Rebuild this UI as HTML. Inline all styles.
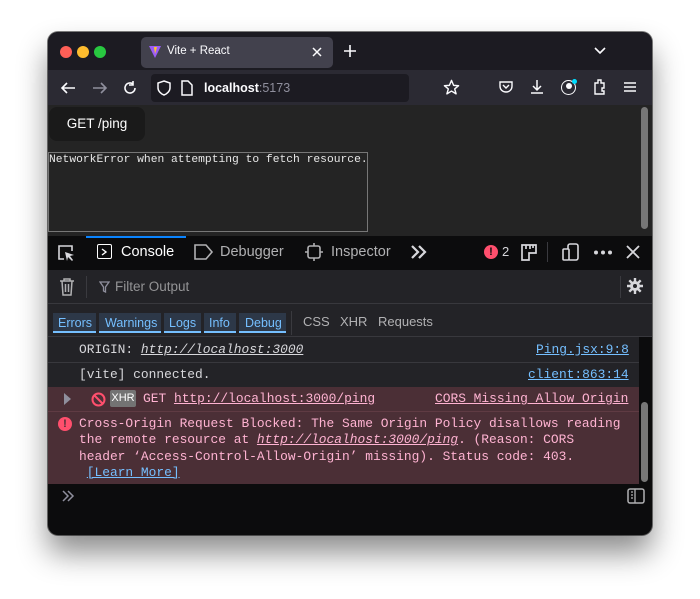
<!DOCTYPE html>
<html><head><meta charset="utf-8">
<style>
*{margin:0;padding:0;box-sizing:border-box}
body{width:700px;height:599px;background:#fff;position:relative;overflow:hidden;font-family:"Liberation Sans",sans-serif}
.a{position:absolute}
.win{left:48px;top:32px;width:604px;height:503px;border-radius:10px;overflow:hidden;background:#0c0c0d;box-shadow:0 18px 30px rgba(0,0,0,.45),0 0 0 1px rgba(0,0,0,.5)}
.mono{font-family:"Liberation Mono","DejaVu Sans Mono",monospace;font-size:12.9px;white-space:pre}
svg{position:absolute}
</style></head><body>
<div class="a win">
 <div class="a" style="left:0;top:0;width:604px;height:38px;background:#1c1b22"></div>
 <div class="a" style="left:12px;top:14px;width:12px;height:12px;border-radius:50%;background:#fe5f57"></div>
 <div class="a" style="left:29px;top:14px;width:12px;height:12px;border-radius:50%;background:#febc2e"></div>
 <div class="a" style="left:46px;top:14px;width:12px;height:12px;border-radius:50%;background:#28c840"></div>
 <div class="a" style="left:93px;top:5px;width:192px;height:31px;border-radius:5px;background:#42414d"></div>
 <svg style="left:100px;top:13px" width="14" height="14" viewBox="0 0 14 14"><path d="M1 1L13 1L7 13Z" fill="#9b5cf6"/><path d="M6 2L9 2L7 9Z" fill="#fcc72b"/></svg>
 <div class="a" style="left:119px;top:13px;color:#fbfbfe;font-size:11.5px">Vite + React</div>
 <svg style="left:264px;top:15px" width="10" height="10"><path d="M1 1L9 9M9 1L1 9" stroke="#fbfbfe" stroke-width="1.5"/></svg>
 <svg style="left:296px;top:13px" width="12" height="12"><path d="M6 0V12M0 6H12" stroke="#fbfbfe" stroke-width="1.6"/></svg>
 <svg style="left:545px;top:14px" width="14" height="10"><path d="M2 2L7 7L12 2" stroke="#fbfbfe" stroke-width="1.6" fill="none"/></svg>
 <div class="a" style="left:0;top:38px;width:604px;height:35px;background:#2b2a33"></div>
 <svg style="left:12px;top:49px" width="16" height="14"><path d="M15 7H2M7 2L2 7L7 12" stroke="#fbfbfe" stroke-width="1.6" fill="none"/></svg>
 <svg style="left:44px;top:49px" width="16" height="14"><path d="M1 7H14M9 2L14 7L9 12" stroke="#8f8f9d" stroke-width="1.6" fill="none"/></svg>
 <svg style="left:74px;top:48px" width="16" height="16"><path d="M13 8A5 5 0 1 1 11 4M11 1V5H7" stroke="#fbfbfe" stroke-width="1.6" fill="none"/></svg>
 <div class="a" style="left:103px;top:42px;width:258px;height:28px;border-radius:4px;background:#1c1b22"></div>
 <svg style="left:109px;top:48px" width="14" height="16"><path d="M7 1L13 3V8C13 11 10 14 7 15C4 14 1 11 1 8V3Z" stroke="#fbfbfe" stroke-width="1.5" fill="none"/></svg>
 <svg style="left:133px;top:48px" width="12" height="16"><path d="M1 1H7L11 5V15H1Z" stroke="#fbfbfe" stroke-width="1.5" fill="none"/></svg>
 <div class="a" style="left:156px;top:49px;font-size:12.5px;color:#fbfbfe;font-weight:bold">localhost<span style="color:#8f8f9d;font-weight:normal">:5173</span></div>
 <svg style="left:395px;top:47px" width="17" height="17" viewBox="0 0 24 24"><path d="M12 2L15 9L22 9.5L16.5 14L18.5 21L12 17L5.5 21L7.5 14L2 9.5L9 9Z" stroke="#fbfbfe" stroke-width="2" fill="none" stroke-linejoin="round"/></svg>
 <svg style="left:451px;top:49px" width="14" height="12"><path d="M1 1H13V5C13 9 10 11 7 11C4 11 1 9 1 5Z M4 4L7 7L10 4" stroke="#fbfbfe" stroke-width="1.4" fill="none"/></svg>
 <svg style="left:482px;top:47px" width="14" height="16"><path d="M7 1V11M3 7L7 11L11 7M1 14H13" stroke="#fbfbfe" stroke-width="1.5" fill="none"/></svg>
 <div class="a" style="left:513px;top:48px;width:15px;height:15px;border-radius:50%;border:1.5px solid #fbfbfe"></div>
 <div class="a" style="left:518px;top:51px;width:6px;height:6px;border-radius:50%;background:#fbfbfe"></div>
 <div class="a" style="left:524px;top:47px;width:5px;height:5px;border-radius:50%;background:#0df"></div>
 <svg style="left:544px;top:46px" width="14" height="18"><path d="M3 5H6V2H9V5H12V10H10V13H12V16H3Z" stroke="#fbfbfe" stroke-width="1.4" fill="none"/></svg>
 <svg style="left:576px;top:50px" width="12" height="10"><path d="M0 1H12M0 5H12M0 9H12" stroke="#fbfbfe" stroke-width="1.5"/></svg>
 <div class="a" style="left:0;top:73px;width:604px;height:131px;background:#242424"></div>
 <div class="a" style="left:1px;top:75px;width:96px;height:34px;border-radius:8px;background:#1a1a1a;color:#fff;font-size:13.5px;line-height:34px;text-align:center">GET /ping</div>
 <div class="a mono" style="left:0;top:120px;width:320px;height:80px;border:1px solid #777;color:#e8e8e8;font-size:11.3px;padding:1px 0 0 0;overflow:hidden">NetworkError when attempting to fetch resource.</div>
 <div class="a" style="left:593px;top:75px;width:7px;height:122px;border-radius:4px;background:#777"></div>
 <div class="a" style="left:0;top:204px;width:604px;height:34px;background:#0c0c0d"></div>
 <div class="a" style="left:38px;top:204px;width:100px;height:2px;background:#0a84ff"></div>
 <svg style="left:8px;top:211px" width="20" height="20"><path d="M8 16H3V3H16V8" stroke="#d7d7db" stroke-width="1.6" fill="none"/><path d="M9 9L18 12L14 13L17 17L16 18L12 14L11 18Z" fill="#d7d7db"/></svg>
 <div class="a" style="left:49px;top:212px;width:15px;height:15px;border:1.6px solid #fff;border-radius:2px"></div>
 <svg style="left:53px;top:216px" width="7" height="8"><path d="M1 1L5 4L1 7" stroke="#fff" stroke-width="1.4" fill="none"/></svg>
 <div class="a" style="left:73px;top:212px;color:#fff;font-size:14.5px">Console</div>
 <svg style="left:146px;top:212px" width="20" height="16"><path d="M1 1H12L18 8L12 15H1Z" stroke="#b1b1b3" stroke-width="1.6" fill="none"/></svg>
 <div class="a" style="left:172px;top:212px;color:#b1b1b3;font-size:14.5px">Debugger</div>
 <svg style="left:257px;top:211px" width="18" height="18"><rect x="3" y="3" width="12" height="12" rx="2" stroke="#b1b1b3" stroke-width="1.6" fill="none"/><path d="M9 0V3M9 15V18M0 9H3M15 9H18" stroke="#b1b1b3" stroke-width="1.6"/></svg>
 <div class="a" style="left:283px;top:212px;color:#b1b1b3;font-size:14.5px">Inspector</div>
 <svg style="left:362px;top:212px" width="18" height="16"><path d="M2 2L8 8L2 14M9 2L15 8L9 14" stroke="#d7d7db" stroke-width="2.2" fill="none"/></svg>
 <div class="a" style="left:436px;top:213px;width:14px;height:14px;border-radius:50%;background:#ff4f6d;color:#0c0c0d;font-size:11px;font-weight:bold;text-align:center;line-height:14px">!</div>
 <div class="a" style="left:454px;top:212px;color:#d7d7db;font-size:13px">2</div>
 <svg style="left:472px;top:211px" width="18" height="18"><path d="M2 17V2H16V10H9V17Z M6 2V6M10 2V6M13 2V5" stroke="#d7d7db" stroke-width="1.7" fill="none"/></svg>
 <div class="a" style="left:499px;top:210px;width:1px;height:20px;background:#3a3a3f"></div>
 <svg style="left:514px;top:211px" width="18" height="18"><rect x="6" y="1" width="10" height="16" rx="2" stroke="#d7d7db" stroke-width="1.6" fill="none"/><rect x="1" y="6" width="6" height="11" rx="1" stroke="#d7d7db" stroke-width="1.6" fill="#0c0c0d"/></svg>
 <svg style="left:545px;top:218px" width="20" height="5"><circle cx="3" cy="2.5" r="2" fill="#d7d7db"/><circle cx="10" cy="2.5" r="2" fill="#d7d7db"/><circle cx="17" cy="2.5" r="2" fill="#d7d7db"/></svg>
 <svg style="left:578px;top:213px" width="14" height="14"><path d="M1 1L13 13M13 1L1 13" stroke="#d7d7db" stroke-width="1.8"/></svg>
 <div class="a" style="left:0;top:238px;width:604px;height:34px;background:#232327;border-bottom:1px solid #38383d"></div>
 <svg style="left:11px;top:246px" width="16" height="18"><path d="M1 3H15M5 3V1H11V3M3 3L4 17H12L13 3M6.5 6V14M9.5 6V14" stroke="#b1b1b3" stroke-width="1.5" fill="none"/></svg>
 <div class="a" style="left:38px;top:244px;width:1px;height:22px;background:#3a3a3f"></div>
 <svg style="left:51px;top:249px" width="11" height="12"><path d="M1 1H10L6.5 6V11L4.5 10V6Z" stroke="#8f8f9d" stroke-width="1.3" fill="none"/></svg>
 <div class="a" style="left:67px;top:247px;color:#939395;font-size:13.5px">Filter Output</div>
 <div class="a" style="left:572px;top:244px;width:1px;height:22px;background:#3a3a3f"></div>
 <svg style="left:578px;top:245px" width="18" height="18" viewBox="0 0 18 18"><circle cx="9" cy="9" r="5" fill="#d7d7db"/><path d="M9 1V17M1 9H17M3.3 3.3L14.7 14.7M14.7 3.3L3.3 14.7" stroke="#d7d7db" stroke-width="2.4"/><circle cx="9" cy="9" r="2" fill="#232327"/></svg>
 <div class="a" style="left:0;top:272px;width:604px;height:33px;background:#232327;border-bottom:1px solid #38383d"></div>
 <div class="a" style="left:5px;top:281px;font-size:12.5px;color:#75bfff">
  <span class="a" style="left:0;width:43px;height:20px;background:#2d3848;border-bottom:2px solid #75bfff;padding:3px 0 0 5px">Errors</span>
  <span class="a" style="left:46px;width:62px;height:20px;background:#2d3848;border-bottom:2px solid #75bfff;padding:3px 0 0 6px">Warnings</span>
  <span class="a" style="left:111px;width:37px;height:20px;background:#2d3848;border-bottom:2px solid #75bfff;padding:3px 0 0 5px">Logs</span>
  <span class="a" style="left:151px;width:32px;height:20px;background:#2d3848;border-bottom:2px solid #75bfff;padding:3px 0 0 5px">Info</span>
  <span class="a" style="left:186px;width:47px;height:20px;background:#2d3848;border-bottom:2px solid #75bfff;padding:3px 0 0 6px">Debug</span>
 </div>
 <div class="a" style="left:243px;top:279px;width:1px;height:24px;background:#3a3a3f"></div>
 <div class="a" style="left:255px;top:282px;color:#b1b1b3;font-size:13px">CSS</div>
 <div class="a" style="left:292px;top:282px;color:#b1b1b3;font-size:13px">XHR</div>
 <div class="a" style="left:330px;top:282px;color:#b1b1b3;font-size:13px">Requests</div>
 <div class="a" style="left:0;top:305px;width:591px;height:50px;background:#232327"></div>
 <div class="a" style="left:0;top:330px;width:591px;height:1px;background:#38383d"></div>
 <div class="a mono" style="left:31px;top:310px;color:#d7d7db">ORIGIN: <i style="text-decoration:underline">http://localhost:3000</i></div>
 <div class="a mono" style="left:488px;top:310px;color:#75bfff;text-decoration:underline">Ping.jsx:9:8</div>
 <div class="a mono" style="left:31px;top:335px;color:#d7d7db">[vite] connected.</div>
 <div class="a mono" style="left:480px;top:335px;color:#75bfff;text-decoration:underline">client:863:14</div>
 <div class="a" style="left:0;top:355px;width:591px;height:97px;background:#4b2f36"></div>
 <div class="a" style="left:0;top:379px;width:591px;height:1px;background:#5f3b43"></div>
 <div class="a" style="left:16px;top:361px;width:0;height:0;border-left:7px solid #8f8f9d;border-top:6px solid transparent;border-bottom:6px solid transparent"></div>
 <svg style="left:43px;top:360px" width="15" height="15"><circle cx="7.5" cy="7.5" r="6" stroke="#ff4f6d" stroke-width="2" fill="none"/><path d="M3.5 3.5L11.5 11.5" stroke="#ff4f6d" stroke-width="2"/></svg>
 <div class="a" style="left:62px;top:358px;width:26px;height:17px;background:#737373;color:#fff;font-size:11px;line-height:17px;text-align:center;border-radius:2px">XHR</div>
 <div class="a mono" style="left:95px;top:359px;color:#ffb3d2">GET <span style="text-decoration:underline">http://localhost:3000/ping</span></div>
 <div class="a mono" style="left:387px;top:359px;color:#ffb3d2;text-decoration:underline">CORS Missing Allow Origin</div>
 <div class="a" style="left:10px;top:385px;width:14px;height:14px;border-radius:50%;background:#ff4f6d;color:#4b2f36;font-size:11px;font-weight:bold;text-align:center;line-height:14px">!</div>
 <div class="a mono" style="left:31px;top:384px;color:#ffb3d2;line-height:16.3px">Cross-Origin Request Blocked: The Same Origin Policy disallows reading
the remote resource at <i style="text-decoration:underline">http://localhost:3000/ping</i>. (Reason: CORS
header ‘Access-Control-Allow-Origin’ missing). Status code: 403.
 <span style="color:#75bfff;text-decoration:underline">[Learn More]</span></div>
 <div class="a" style="left:593px;top:370px;width:7px;height:80px;border-radius:4px;background:#777"></div>
 <svg style="left:13px;top:458px" width="14" height="12"><path d="M2 1L7 6L2 11M7 1L12 6L7 11" stroke="#8f8f9d" stroke-width="1.5" fill="none"/></svg>
 <svg style="left:579px;top:456px" width="18" height="16"><rect x="1" y="1" width="16" height="14" rx="2" stroke="#b1b1b3" stroke-width="1.5" fill="none"/><path d="M8 1V15M4 4H6M4 7H6M4 10H6" stroke="#b1b1b3" stroke-width="1.3"/></svg>
</div>
</body></html>
